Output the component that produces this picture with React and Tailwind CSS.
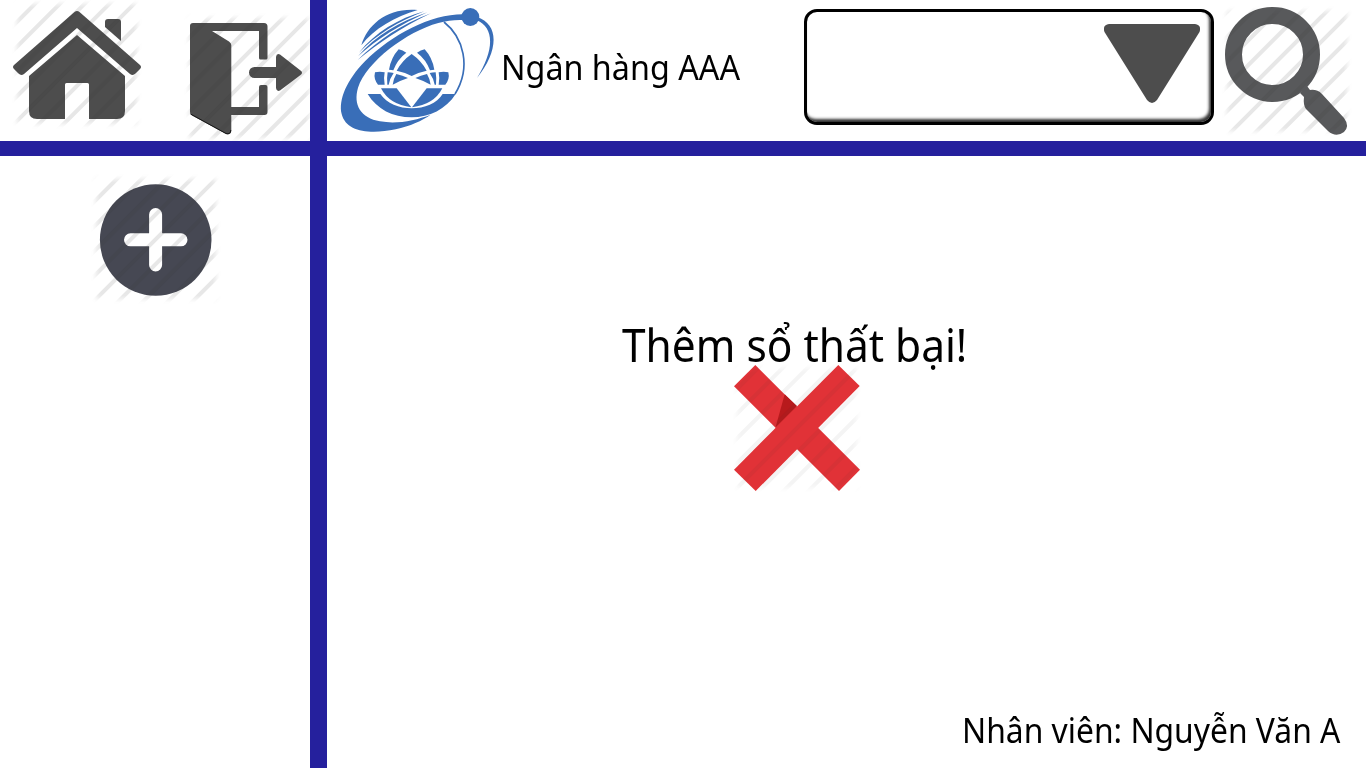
const stripeOffsets = [-7, -6, -5, -4, -3, -2, -1, 0, 1, 2, 3, 4, 5, 6, 7];

// Diagonal hatch that fades out towards the edges of a square tile.
function Hatch({ id, x, y, size = 128, shift = 0, opacity = 0.12 }) {
  const cx = x + size / 2;
  const cy = y + size / 2;
  return (
    <g>
      <defs>
        <filter id={id + "-blur"}>
          <feGaussianBlur stdDeviation="2.5" />
        </filter>
        <mask id={id} maskUnits="userSpaceOnUse" x={x - 10} y={y - 10} width={size + 20} height={size + 20}>
          <rect x={x + 4} y={y + 4} width={size - 8} height={size - 8} fill="#fff" filter={`url(#${id}-blur)`} />
        </mask>
      </defs>
      <g mask={`url(#${id})`} stroke="#3a3a3a" strokeOpacity={opacity} strokeWidth="4">
        {stripeOffsets.map((n) => {
          const c = cx + n * 24.8 + shift;
          return <line key={n} x1={c - 150} y1={cy + 150} x2={c + 150} y2={cy - 150} />;
        })}
      </g>
    </g>
  );
}

function HomeIcon() {
  return (
    <svg className="h-[141px] w-[150px] shrink-0" viewBox="0 0 150 141">
      <g fill="#4d4d4d">
        <path d="M74.5 12Q77 10 79.5 12L140 65Q142 67 140 69L135.500 73.500Q133 76 130 74L77 28L24 74Q21 76 18.500 73.500L14 69Q12 67 14 65Z" />
        <path d="M77 35L125 76V111Q125 119 117 119H89V84.500Q89 83 87.500 83H66.500Q65 83 65 84.500V119H37Q29 119 29 111V76Z" />
        <path d="M105 27V22Q105 19 108 19H118Q121 19 121 22V41Z" />
      </g>
      <Hatch id="home-hatch" x={13} y={0} shift={-3} />
    </svg>
  );
}

function ExitIcon() {
  return (
    <svg className="h-[141px] w-[160px] shrink-0" viewBox="150 0 160 141">
      <g fill="#4d4d4d">
        <path d="M193 23H264Q267.500 23 267.500 26.500V58Q267.500 59.500 266 59.500H260.500Q259 59.500 259 58V31H212L229 41.500Q231.300 43 231.300 45V107H259V87Q259 85 261 85H265.500Q267.500 85 267.500 87V112Q267.500 115 264.500 115H231.300V131Q231 135 226 134L192 115.500Q190 114 190 112V26Q190 23 193 23Z" />
        <path d="M254.500 67H276V57Q276.500 53 280 54.500L300.500 70.500Q303.500 72.500 300.500 75L280 90.500Q276.500 92 276 88V78H254.500A5.500 5.500 0 0 1 254.500 67Z" />
      </g>
      <path d="M190.500 114L226 133.500Q230.500 135 230.800 130" fill="none" stroke="#161616" strokeWidth="1" />
      <Hatch id="exit-hatch" x={185} y={14} shift={-1} />
    </svg>
  );
}

const lotusHalf = (
  <g>
    <path d="M120 97Q134 94 149 97Q145 116 149 134H129Q115 117 120 97Z" />
    <path d="M158 97Q168 97 176 99Q164 116 161 134H157Q155 114 158 97Z" />
    <path d="M191 28Q203 30 214 38Q187 58 175 91Q169 89 162 89Q168 53 191 28Z" />
    <path d="M184 102Q203 106 219 114Q195 122 173 134Q175 117 184 102Z" />
    <path d="M138 145H185L229 202Q163 194 138 145Z" />
  </g>
);

function BankLogo() {
  return (
    <svg className="h-[141px] w-[170px] shrink-0" viewBox="-9 0 510 423">
      <g fill="#396eb8">
        <path d="M94 136C112 72 175 22 263 30C195 50 132 86 94 136Z" />
        <path d="M87 158C135 98 205 55 283 34C205 64 138 105 87 158Z" />
        <path d="M84 169C135 108 210 64 292 37C212 73 140 117 84 169Z" />
        <path d="M83 180C145 120 215 72 303 40C215 82 145 130 83 180Z" />
        <path d="M410 43C310 38 190 100 105 184C50 240 25 300 35 342C48 396 120 404 197 388C240 378 277 362 302 344C255 362 200 373 150 364C92 353 69 315 84 263C110 185 230 95 325 69C355 61 382 58 410 61Z" />
        <path d="M440 51C512 73 503 158 441 234C490 155 497 85 440 61Z" />
        <circle cx="421" cy="51" r="27" />
        <path d="M113 282H151C170 310 208 325 245 325C283 325 321 310 338 282H377C348 328 298 352 245 352C188 352 141 328 113 282Z" />
        <g transform="translate(15 120)">
          {lotusHalf}
          <g transform="translate(460 0) scale(-1 1)">{lotusHalf}</g>
          <path d="M230 42Q259 62 275 92Q250 97 230 108Q210 97 185 92Q201 62 230 42Z" />
        </g>
      </g>
      <path d="M342 66C400 112 425 201 375 282" fill="none" stroke="#396eb8" strokeWidth="5" />
    </svg>
  );
}

function SearchIcon() {
  return (
    <svg className="h-[141px] w-[146px] shrink-0" viewBox="1220 0 146 141">
      <circle cx="1272.500" cy="54.500" r="39" fill="none" stroke="#58595b" strokeWidth="17" />
      <path d="M1302 91L1307 86L1310 90Q1317 89 1322 94L1344 118Q1350 126 1344 132Q1336 138 1328 131L1306 109Q1303 105 1304 97L1300 93Z" fill="#58595b" />
      <Hatch id="search-hatch" x={1223} y={7} shift={5} />
    </svg>
  );
}

function AddIcon() {
  return (
    <svg className="h-[145px] w-[150px]" viewBox="80 165 150 145">
      <circle cx="155.700" cy="240" r="55.800" fill="#464853" />
      <path d="M130.500 239.800H181M155.600 214.500V265" stroke="#fff" strokeWidth="13" strokeLinecap="round" />
      <Hatch id="add-hatch" x={92} y={175} shift={0} />
    </svg>
  );
}

function CrossIcon() {
  return (
    <svg className="h-[145px] w-[155px]" viewBox="0 0 155 145">
      <path d="M35.300 10L14 31.300L119 136L140 114.700Z" fill="#e13237" />
      <path d="M64.700 39.300L77 51L55.500 72.500Z" fill="#b71a1c" />
      <path d="M118.300 10L139.700 31L35.700 136L14 114.700Z" fill="#e13237" />
      <Hatch id="cross-hatch" x={13} y={9} shift={0} opacity={0.055} />
    </svg>
  );
}

export default function App() {
  return (
    <div className="grid h-[768px] w-[1366px] grid-cols-[310px_17px_1fr] grid-rows-[141px_15px_1fr] overflow-hidden bg-white font-['Noto_Sans',sans-serif] text-black">
      <nav className="flex">
        <HomeIcon />
        <ExitIcon />
      </nav>
      <div className="row-span-3 bg-[#25209d]" />
      <header className="flex">
        <BankLogo />
        <div className="flex w-[307px] items-center pb-[7px] pl-1">
          <span className="origin-left scale-x-[0.936] whitespace-nowrap text-[34.500px] leading-none">Ngân hàng AAA</span>
        </div>
        <button className="mt-[9px] flex h-[116px] w-[410px] shrink-0 justify-end rounded-[13px] border-[3px] border-black pt-3 pr-[11px] shadow-[inset_-2px_-3px_3px_0px_#333]">
          <svg className="h-20 w-24" viewBox="0 0 96 80">
            <path d="M5 0H91Q98 1 95.500 8L53 76Q48 82 43 76L0.500 8Q-2 1 5 0Z" fill="#4d4d4d" />
          </svg>
        </button>
        <div className="w-1.5 shrink-0" />
        <SearchIcon />
      </header>
      <div className="bg-[#25209d]" />
      <div className="bg-[#25209d]" />
      <aside className="pt-[9px] pl-20">
        <AddIcon />
      </aside>
      <main className="flex flex-col justify-between pt-[160px] pr-[26px] pb-4">
        <section className="pl-[295px]">
          <h1 className="h-[39px] origin-left scale-x-[0.922] text-[46px] leading-[56px] whitespace-nowrap">Thêm sổ thất bại!</h1>
          <div className="pl-[98px]">
            <CrossIcon />
          </div>
        </section>
        <p className="origin-right scale-x-[0.922] self-end text-[34.500px] leading-[44px] whitespace-nowrap">Nhân viên: Nguyễn Văn A</p>
      </main>
    </div>
  );
}
